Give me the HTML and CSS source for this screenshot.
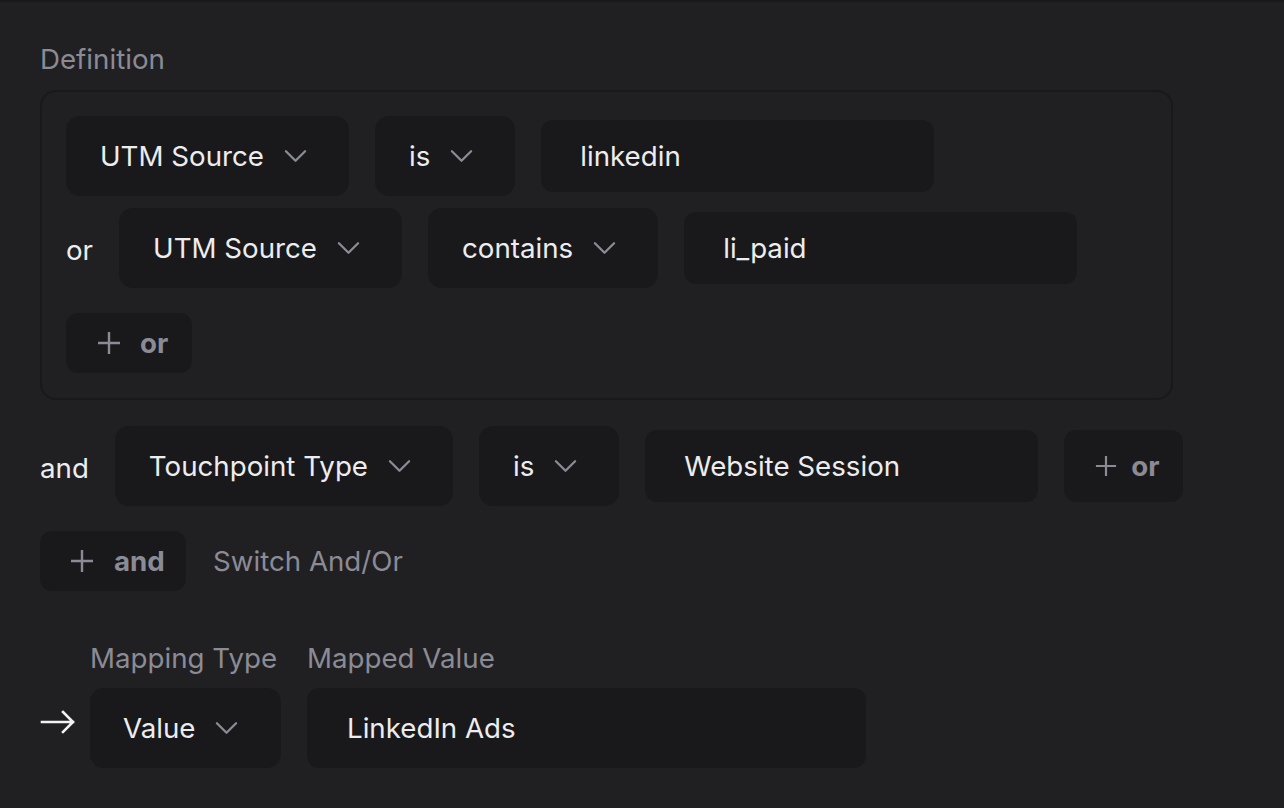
FILE: index.html
```html
<!DOCTYPE html>
<html>
<head>
<meta charset="utf-8">
<link rel="stylesheet" href="styles.css">
</head>
<body>
<div class="page">
  <div class="section-label">Definition</div>
  <div class="group">
    <div class="row">
      <div class="select">UTM Source<svg class="chev" viewBox="0 0 24 14"><path d="M2 2 L12 12 L22 2"/></svg></div>
      <div class="select">is<svg class="chev" viewBox="0 0 24 14"><path d="M2 2 L12 12 L22 2"/></svg></div>
      <div class="input">linkedin</div>
    </div>
    <div class="row">
      <span class="conj conj-or">or</span>
      <div class="select">UTM Source<svg class="chev" viewBox="0 0 24 14"><path d="M2 2 L12 12 L22 2"/></svg></div>
      <div class="select">contains<svg class="chev" viewBox="0 0 24 14"><path d="M2 2 L12 12 L22 2"/></svg></div>
      <div class="input">li_paid</div>
    </div>
    <div class="add-btn add-or-inner"><svg class="plus" viewBox="0 0 24 24"><path d="M12 1 V23 M1 12 H23"/></svg><span>or</span></div>
  </div>
  <div class="row row-and">
    <span class="conj conj-and">and</span>
    <div class="select">Touchpoint Type<svg class="chev" viewBox="0 0 24 14"><path d="M2 2 L12 12 L22 2"/></svg></div>
    <div class="select">is<svg class="chev" viewBox="0 0 24 14"><path d="M2 2 L12 12 L22 2"/></svg></div>
    <div class="input">Website Session</div>
    <div class="add-btn add-or-tall"><svg class="plus" viewBox="0 0 24 24"><path d="M12 1 V23 M1 12 H23"/></svg><span>or</span></div>
  </div>
  <div class="actions">
    <div class="add-btn add-and"><svg class="plus" viewBox="0 0 24 24"><path d="M12 1 V23 M1 12 H23"/></svg><span>and</span></div>
    <span class="switch">Switch And/Or</span>
  </div>
  <div class="mapping">
    <div class="arrow-cell"><svg class="arrow" viewBox="0 0 36 24"><path d="M2 12 H33 M23 2 L33 12 L23 22"/></svg></div>
    <div class="field">
      <div class="field-label">Mapping Type</div>
      <div class="select">Value<svg class="chev" viewBox="0 0 24 14"><path d="M2 2 L12 12 L22 2"/></svg></div>
    </div>
    <div class="field">
      <div class="field-label">Mapped Value</div>
      <div class="input input-map">LinkedIn Ads</div>
    </div>
  </div>
</div>
</body>
</html>
```
FILE: styles.css
```css
* { box-sizing: border-box; }
html, body {
  margin: 0;
  padding: 0;
  background: #202023;
}
body {
  font-family: Inter, "Noto Sans", sans-serif;
  font-size: 27.7px;
  color: #ededef;
  border-top: 2px solid #19191b;
  min-height: 808px;
}
.page {
  padding: 42px 0 0 40px;
}
.section-label {
  color: #8b8b96;
  line-height: 30px;
  height: 30px;
}
.group {
  margin-top: 16px;
  width: 1133px;
  border: 2px solid #19191b;
  border-radius: 16px;
  padding: 24px 24px 25px 24px;
  display: flex;
  flex-direction: column;
  gap: 12px;
}
.row {
  display: flex;
  align-items: center;
  gap: 26px;
}
.select {
  height: 80px;
  background: #19191b;
  border-radius: 14px;
  display: flex;
  align-items: center;
  gap: 20px;
  padding: 0 42px 0 34px;
  color: #ededef;
  white-space: nowrap;
}
.chev {
  width: 23px;
  height: 14px;
  fill: none;
  stroke: #8b8b96;
  stroke-width: 2.4;
  stroke-linecap: round;
  stroke-linejoin: round;
  flex: none;
}
.input {
  height: 72px;
  width: 393px;
  background: #19191b;
  border-radius: 12px;
  display: flex;
  align-items: center;
  padding-left: 39px;
}
.conj { line-height: 30px; padding-top: 4px; }
.add-btn {
  background: #19191b;
  border-radius: 12px;
  display: flex;
  align-items: center;
  color: #8b8b96;
  font-weight: 700;
}
.plus {
  width: 24px;
  height: 24px;
  fill: none;
  stroke: #8b8b96;
  stroke-width: 2.4;
  flex: none;
}
.add-or-inner {
  align-self: flex-start;
  margin-top: 13px;
  height: 60px;
  width: 126px;
  padding-left: 31px;
  gap: 19px;
}
.add-or-tall {
  height: 72px;
  width: 119px;
  padding-left: 31px;
  gap: 14px;
}
.add-or-tall .plus { width: 22px; height: 22px; }
.row-and {
  margin-top: 26px;
}
.actions {
  margin-top: 25px;
  display: flex;
  align-items: center;
  gap: 27px;
}
.add-and {
  height: 60px;
  width: 146px;
  padding-left: 30px;
  gap: 20px;
}
.switch { color: #8b8b96; }
.mapping {
  margin-top: 52px;
  display: flex;
  align-items: flex-end;
  gap: 14px;
}
.arrow-cell {
  height: 80px;
  display: flex;
  align-items: center;
  padding-bottom: 13px;
}
.arrow {
  width: 36px;
  height: 24px;
  fill: none;
  stroke: #f2f2f4;
  stroke-width: 2.6;
  stroke-linecap: square;
}
.field {
  display: flex;
  flex-direction: column;
  gap: 15px;
}
.field + .field { margin-left: 12px; }
.field-label {
  color: #8b8b96;
  line-height: 30px;
}
.mapping .select { width: 191px; padding-left: 33px; }
.input-map {
  height: 80px;
  width: 559px;
  padding-left: 40px;
}
```
